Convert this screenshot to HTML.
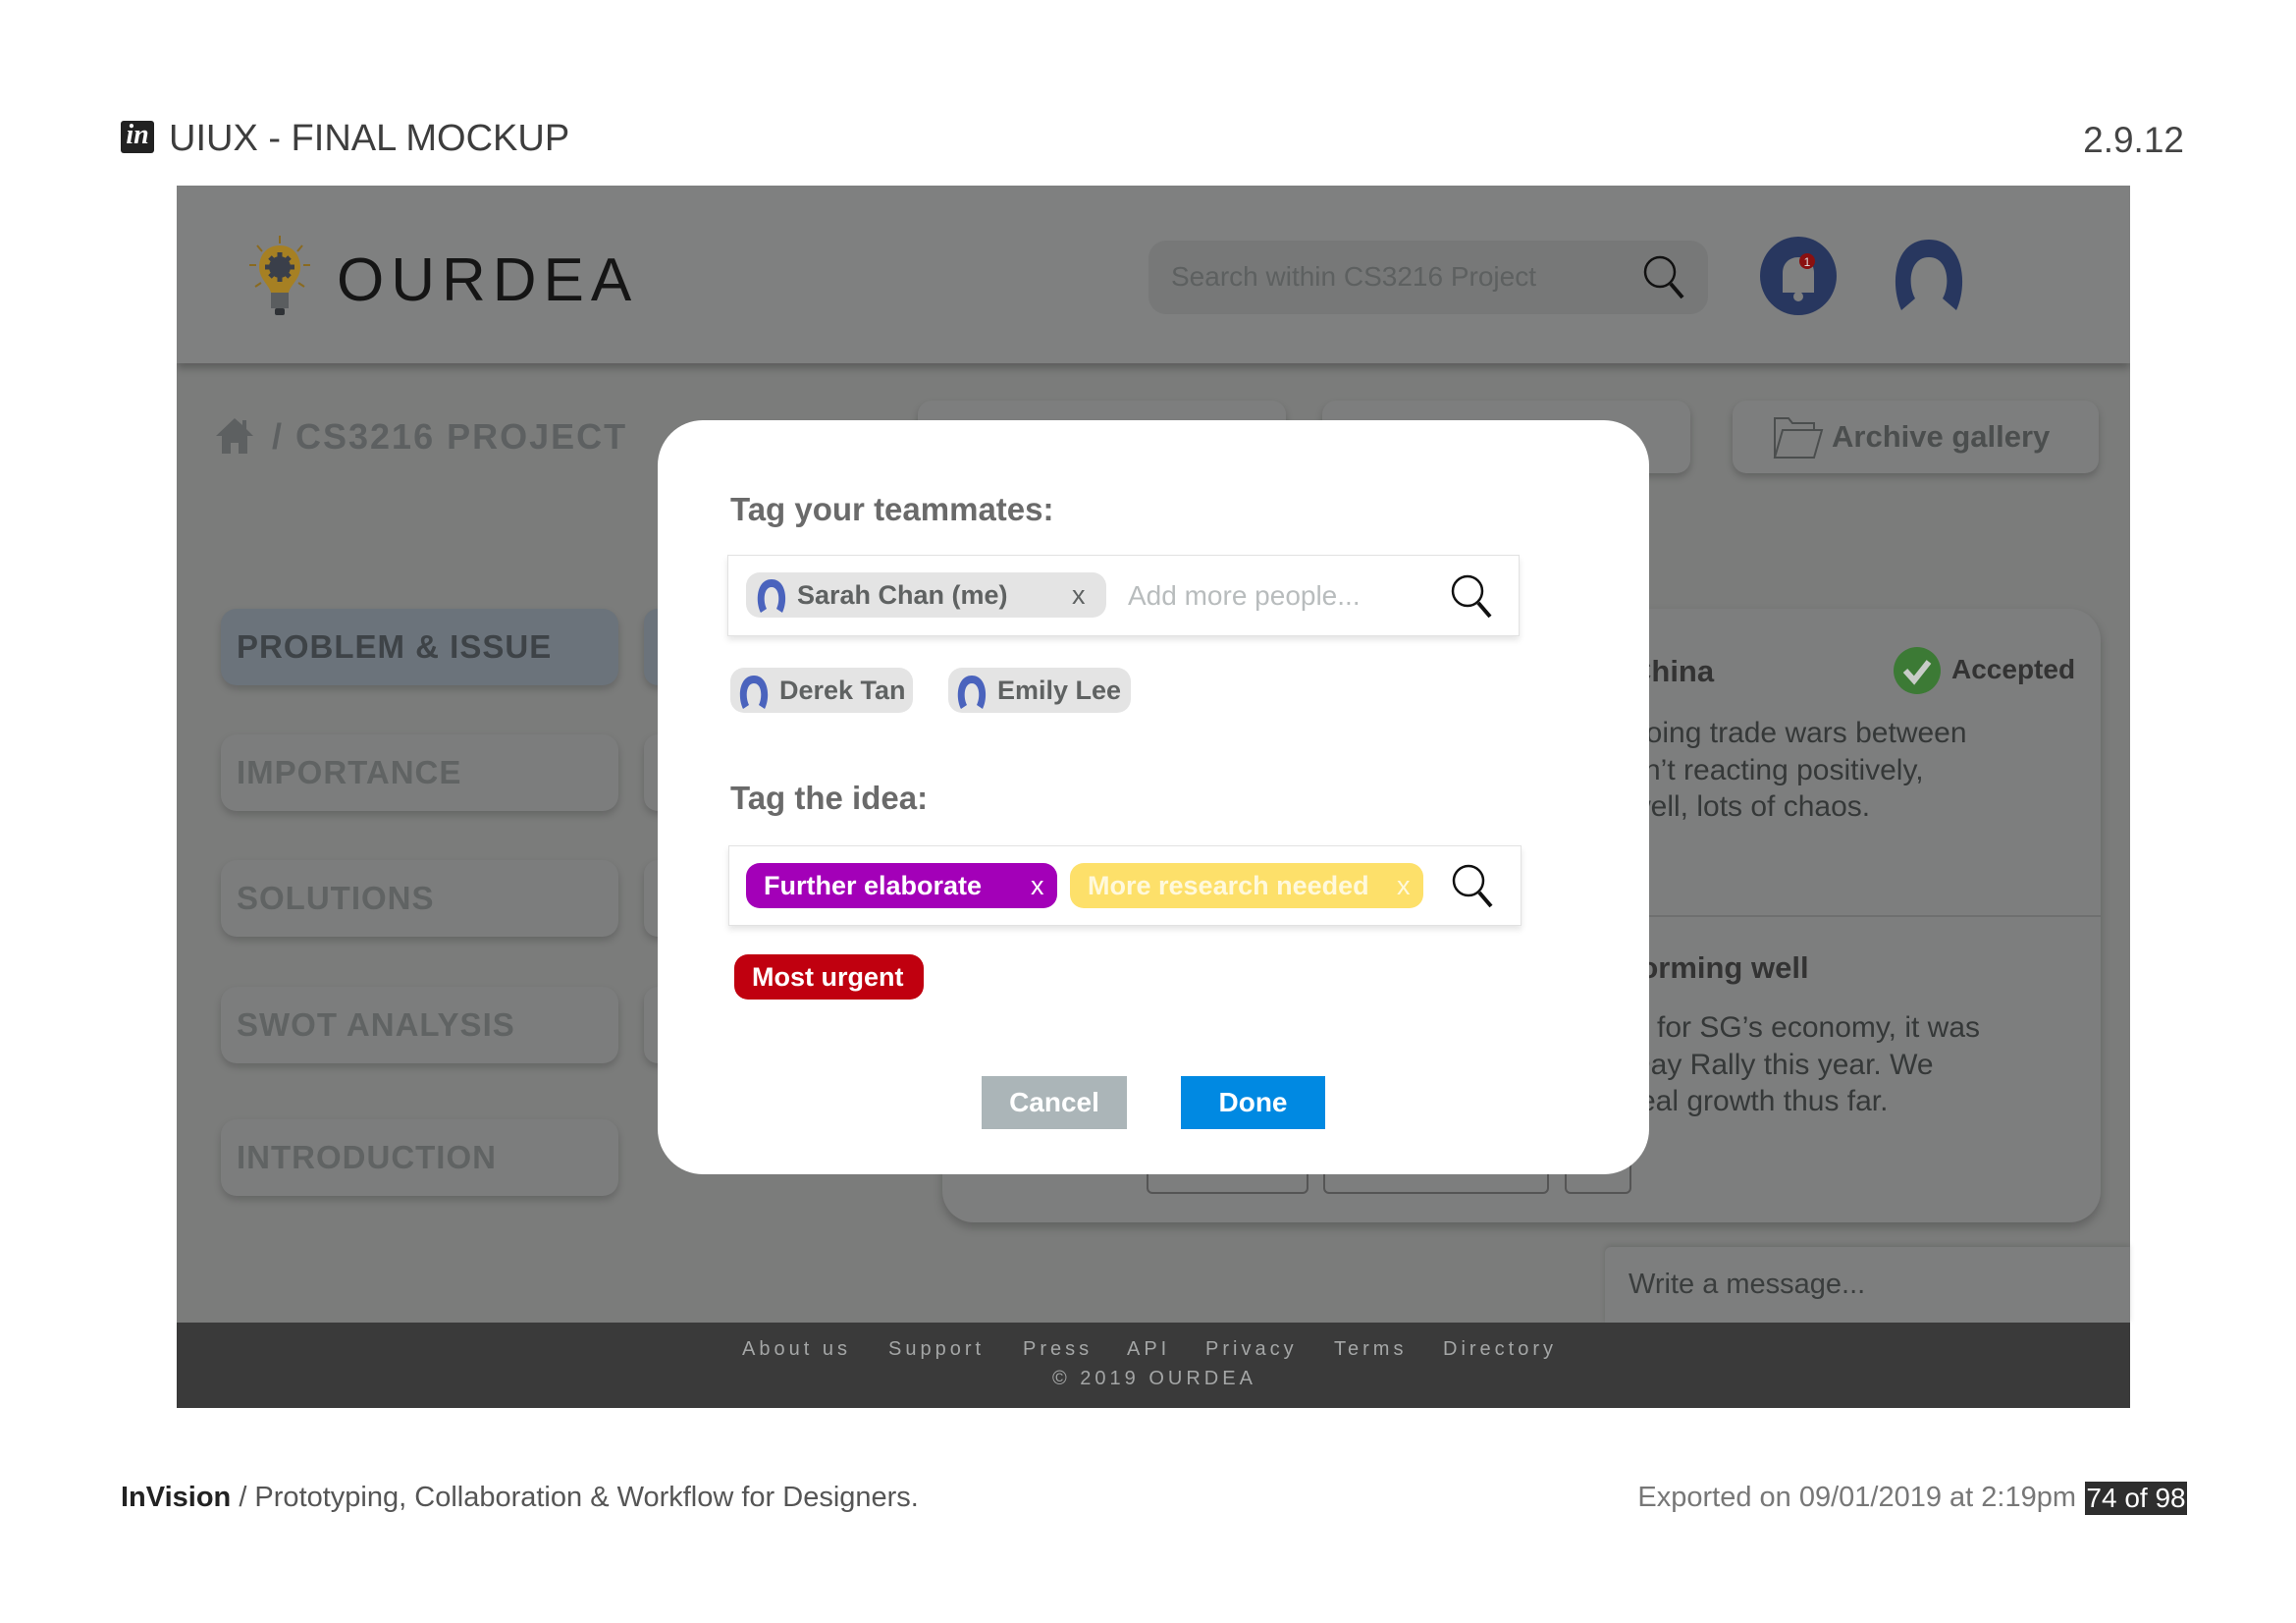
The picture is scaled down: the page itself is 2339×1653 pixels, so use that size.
<!DOCTYPE html>
<html><head><meta charset="utf-8"><style>
*{margin:0;padding:0;box-sizing:border-box}
body{width:2339px;height:1653px;background:#fff;position:relative;overflow:hidden;font-family:"Liberation Sans",Arial,sans-serif}
.a{position:absolute}
.t{white-space:nowrap}
.side{position:absolute;left:225px;width:405px;height:78px;border-radius:16px;background:#7c7d7d;box-shadow:0 4px 8px rgba(0,0,0,.18);font-weight:bold;font-size:33px;color:#606363;padding-left:16px;line-height:78px;letter-spacing:1px;white-space:nowrap}
.stub{position:absolute;left:656px;width:30px;height:78px;border-radius:14px 0 0 14px;background:#7c7d7d;box-shadow:0 4px 8px rgba(0,0,0,.18)}
.tab{position:absolute;top:408px;height:74px;border-radius:14px;background:#7d7e7e;box-shadow:0 4px 8px rgba(0,0,0,.2)}
.chip{position:absolute;height:46px;border-radius:14px;background:#e4e4e4;font-size:27px;color:#5f6262;line-height:46px;font-weight:bold;white-space:nowrap}
.tag{position:absolute;height:46px;border-radius:14px;font-size:27px;color:#fff;line-height:46px;font-weight:bold;padding-left:18px;white-space:nowrap}
.body{font-size:30px;color:#353838}
.fl{position:absolute;top:1363px;font-size:20px;letter-spacing:4px;color:#a4a6a6;white-space:nowrap}
</style></head><body>
<div class="a" style="left:123px;top:123px;width:34px;height:33px;background:#222;border-radius:3px;color:#fff;font-family:'Liberation Serif',serif;font-style:italic;font-weight:bold;font-size:28px;line-height:30px;text-align:center">in</div>
<div class="a t" style="left:172px;top:120px;font-size:38px;color:#3d3d3d">UIUX - FINAL MOCKUP</div>
<div class="a t" style="right:114px;top:122px;font-size:37px;color:#444">2.9.12</div>

<div class="a" style="left:180px;top:189px;width:1990px;height:1245px;background:#7b7c7b;overflow:hidden">
  <div class="a" style="left:0;top:0;width:1990px;height:181px;background:#7f8080;box-shadow:0 5px 8px rgba(0,0,0,.25)"></div>
</div>
<svg class="a" style="left:250px;top:238px" width="70" height="88" viewBox="0 0 70 88">
  <g stroke="#8a6a20" stroke-width="2"><line x1="35" y1="2" x2="35" y2="10"/><line x1="12" y1="12" x2="17" y2="18"/><line x1="58" y1="12" x2="53" y2="18"/><line x1="4" y1="32" x2="11" y2="32"/><line x1="66" y1="32" x2="59" y2="32"/><line x1="10" y1="54" x2="16" y2="50"/><line x1="60" y1="54" x2="54" y2="50"/></g>
  <path d="M35 12 C20 12 14 24 14 34 C14 46 24 52 26 60 L44 60 C46 52 56 46 56 34 C56 24 50 12 35 12 Z" fill="#a68023"/>
  <circle cx="35" cy="34" r="11" fill="#3a3f4a"/><circle cx="35" cy="34" r="5" fill="#a68023"/>
  <g stroke="#3a3f4a" stroke-width="5"><line x1="35" y1="19" x2="35" y2="49"/><line x1="20" y1="34" x2="50" y2="34"/><line x1="25" y1="24" x2="45" y2="44"/><line x1="45" y1="24" x2="25" y2="44"/></g>
  <rect x="26" y="60" width="18" height="16" fill="#5a5d5f"/><rect x="30" y="76" width="10" height="7" rx="2" fill="#2f3236"/>
</svg>
<div class="a t" style="left:343px;top:250px;font-size:62px;letter-spacing:7px;color:#151515">OURDEA</div>
<div class="a" style="left:1170px;top:245px;width:570px;height:75px;border-radius:18px;background:#777878"></div>
<div class="a t" style="left:1193px;top:266px;font-size:28px;color:#5d6060">Search within CS3216 Project</div>
<svg class="a" style="left:1672px;top:258px" width="46" height="50" viewBox="0 0 46 50"><circle cx="19" cy="19" r="15" fill="none" stroke="#111" stroke-width="2.5"/><line x1="30" y1="31" x2="42" y2="45" stroke="#111" stroke-width="4"/></svg>
<svg class="a" style="left:1791px;top:240px" width="82" height="82" viewBox="0 0 82 82"><ellipse cx="41" cy="41" rx="39" ry="40" fill="#28375f"/><path d="M25 58 L25 38 C25 28 32 22 41 22 C50 22 57 28 57 38 L57 58 Z" fill="#7f8080"/><circle cx="41" cy="62" r="5" fill="#7f8080"/><circle cx="50" cy="26" r="8" fill="#8a1010"/><text x="50" y="31" font-size="12" fill="#ddd" text-anchor="middle" font-family="Liberation Sans">1</text></svg>
<svg class="a" style="left:1925px;top:240px" width="80" height="80" viewBox="0 0 80 80"><path d="M12 76 C0 50 4 4 40 4 C76 4 80 50 68 76 L54 64 C62 50 60 22 40 22 C20 22 18 50 26 64 Z" fill="#28375f"/></svg>
<svg class="a" style="left:218px;top:424px" width="42" height="40" viewBox="0 0 42 40"><path d="M21 2 L2 20 L8 20 L8 38 L17 38 L17 27 L25 27 L25 38 L34 38 L34 20 L40 20 L33 13 L33 4 L29 4 L29 9 Z" fill="#5d6061"/></svg>
<div class="a t" style="left:277px;top:424px;font-size:36px;font-weight:bold;color:#5d6061;letter-spacing:2px">/ CS3216 PROJECT</div>
<div class="tab" style="left:935px;width:375px"></div>
<div class="tab" style="left:1347px;width:375px"></div>
<div class="tab" style="left:1765px;width:373px"></div>
<svg class="a" style="left:1806px;top:422px" width="52" height="46" viewBox="0 0 52 46"><path d="M2 44 L2 4 L16 4 L20 9 L42 9 L42 16 M2 44 L10 16 L50 16 L42 44 Z" fill="none" stroke="#4b4e4e" stroke-width="2"/></svg>
<div class="a t" style="left:1866px;top:427px;font-size:31px;font-weight:bold;color:#4b4e4e">Archive gallery</div>
<div class="side" style="top:620px;background:#6b737b;color:#3e4347">PROBLEM &amp; ISSUE</div>
<div class="side" style="top:748px">IMPORTANCE</div>
<div class="side" style="top:876px">SOLUTIONS</div>
<div class="side" style="top:1005px">SWOT ANALYSIS</div>
<div class="side" style="top:1140px">INTRODUCTION</div>
<div class="stub" style="top:620px;background:#6b737b"></div>
<div class="stub" style="top:748px"></div>
<div class="stub" style="top:876px"></div>
<div class="stub" style="top:1005px"></div>
<div class="a" style="left:960px;top:620px;width:1180px;height:625px;border-radius:32px;background:#7d7e7e;box-shadow:0 5px 10px rgba(0,0,0,.22)"></div>
<div class="a" style="left:960px;top:932px;width:1180px;height:2px;background:#6e6f6f"></div>
<div class="a t" style="left:1660px;top:666px;font-size:31px;font-weight:bold;color:#333">China</div>
<svg class="a" style="left:1928px;top:658px" width="50" height="50" viewBox="0 0 50 50"><circle cx="25" cy="25" r="24" fill="#3c7a35"/><path d="M13 25 L22 35 L37 16" fill="none" stroke="#c8ccc8" stroke-width="6"/></svg>
<div class="a t" style="left:1988px;top:666px;font-size:28px;font-weight:bold;color:#333">Accepted</div>
<div class="a t body" style="left:1660px;top:730px">going trade wars between</div>
<div class="a t body" style="left:1660px;top:768px">sn’t reacting positively,</div>
<div class="a t body" style="left:1660px;top:805px">well, lots of chaos.</div>
<div class="a t" style="left:1660px;top:968px;font-size:31px;font-weight:bold;color:#333">forming well</div>
<div class="a t body" style="left:1688px;top:1030px">for SG’s economy, it was</div>
<div class="a t body" style="left:1660px;top:1068px">Day Rally this year. We</div>
<div class="a t body" style="left:1660px;top:1105px">real growth thus far.</div>
<div class="a" style="left:1168px;top:1172px;width:165px;height:44px;border:2px solid #555;border-radius:6px"></div>
<div class="a" style="left:1348px;top:1172px;width:230px;height:44px;border:2px solid #555;border-radius:6px"></div>
<div class="a" style="left:1594px;top:1172px;width:68px;height:44px;border:2px solid #555;border-radius:6px"></div>
<div class="a" style="left:1635px;top:1270px;width:535px;height:78px;background:#7d7e7e;border-radius:6px 0 0 0;box-shadow:0 -2px 6px rgba(0,0,0,.12)"></div>
<div class="a t" style="left:1659px;top:1292px;font-size:29px;color:#3a3d3d">Write a message...</div>
<div class="a" style="left:180px;top:1347px;width:1990px;height:87px;background:#3a3a3a"></div>
<div class="fl" style="left:756px">About us</div>
<div class="fl" style="left:905px">Support</div>
<div class="fl" style="left:1042px">Press</div>
<div class="fl" style="left:1148px">API</div>
<div class="fl" style="left:1228px">Privacy</div>
<div class="fl" style="left:1359px">Terms</div>
<div class="fl" style="left:1470px">Directory</div>
<div class="fl" style="left:1072px;top:1393px">© 2019 OURDEA</div>

<div class="a" style="left:670px;top:428px;width:1010px;height:768px;border-radius:46px;background:#fff"></div>
<div class="a t" style="left:744px;top:500px;font-size:33px;font-weight:bold;color:#6a6a6a">Tag your teammates:</div>
<div class="a" style="left:741px;top:565px;width:807px;height:83px;border:1px solid #e2e2e2;box-shadow:0 4px 6px rgba(0,0,0,.1);background:#fff"></div>
<div class="chip" style="left:760px;top:583px;width:367px;padding-left:52px">Sarah Chan (me)<span style="position:absolute;left:332px;font-weight:normal">x</span></div>
<div class="a t" style="left:1149px;top:591px;font-size:28px;color:#b8bcbd">Add more people...</div>
<svg class="a" style="left:1476px;top:582px" width="48" height="52" viewBox="0 0 48 52"><circle cx="19" cy="20" r="15" fill="none" stroke="#111" stroke-width="2.5"/><line x1="30" y1="32" x2="42" y2="46" stroke="#111" stroke-width="4"/></svg>
<div class="chip" style="left:744px;top:680px;width:186px;padding-left:50px">Derek Tan</div>
<div class="chip" style="left:966px;top:680px;width:186px;padding-left:50px">Emily Lee</div>
<svg class="a" style="left:769px;top:588px" width="34" height="38" viewBox="0 0 34 38"><path d="M6 36 C0 24 2 2 17 2 C32 2 34 24 28 36 L22 32 C26 24 25 10 17 10 C9 10 8 24 12 32 Z" fill="#4a63bd"/></svg>
<svg class="a" style="left:751px;top:686px" width="34" height="38" viewBox="0 0 34 38"><path d="M6 36 C0 24 2 2 17 2 C32 2 34 24 28 36 L22 32 C26 24 25 10 17 10 C9 10 8 24 12 32 Z" fill="#4a63bd"/></svg>
<svg class="a" style="left:973px;top:686px" width="34" height="38" viewBox="0 0 34 38"><path d="M6 36 C0 24 2 2 17 2 C32 2 34 24 28 36 L22 32 C26 24 25 10 17 10 C9 10 8 24 12 32 Z" fill="#4a63bd"/></svg>
<div class="a t" style="left:744px;top:794px;font-size:33px;font-weight:bold;color:#6a6a6a">Tag the idea:</div>
<div class="a" style="left:742px;top:861px;width:808px;height:82px;border:1px solid #e2e2e2;box-shadow:0 4px 6px rgba(0,0,0,.1);background:#fff"></div>
<div class="tag" style="left:760px;top:879px;width:317px;background:#a300b8">Further elaborate<span style="position:absolute;left:290px;font-weight:normal">x</span></div>
<div class="tag" style="left:1090px;top:879px;width:360px;background:#fde06a;color:#fff9dc">More research needed<span style="position:absolute;left:333px;font-weight:normal">x</span></div>
<svg class="a" style="left:1477px;top:877px" width="48" height="52" viewBox="0 0 48 52"><circle cx="19" cy="20" r="15" fill="none" stroke="#111" stroke-width="2.5"/><line x1="30" y1="32" x2="42" y2="46" stroke="#111" stroke-width="4"/></svg>
<div class="tag" style="left:748px;top:972px;width:193px;background:#c0000f">Most urgent</div>
<div class="a" style="left:1000px;top:1096px;width:148px;height:54px;background:#abb5b8;color:#fff;font-weight:bold;font-size:28px;line-height:54px;text-align:center">Cancel</div>
<div class="a" style="left:1203px;top:1096px;width:147px;height:54px;background:#0089e2;color:#fff;font-weight:bold;font-size:28px;line-height:54px;text-align:center">Done</div>

<div class="a t" style="left:123px;top:1509px;font-size:29px;color:#555"><b style="color:#222">InVision</b> / Prototyping, Collaboration &amp; Workflow for Designers.</div>
<div class="a t" style="right:224px;top:1509px;font-size:29px;color:#777">Exported on 09/01/2019 at 2:19pm</div>
<div class="a t" style="left:2124px;top:1509px;width:104px;height:34px;background:#2e2e2e;color:#fff;font-size:28px;line-height:34px;text-align:center">74 of 98</div>
</body></html>
